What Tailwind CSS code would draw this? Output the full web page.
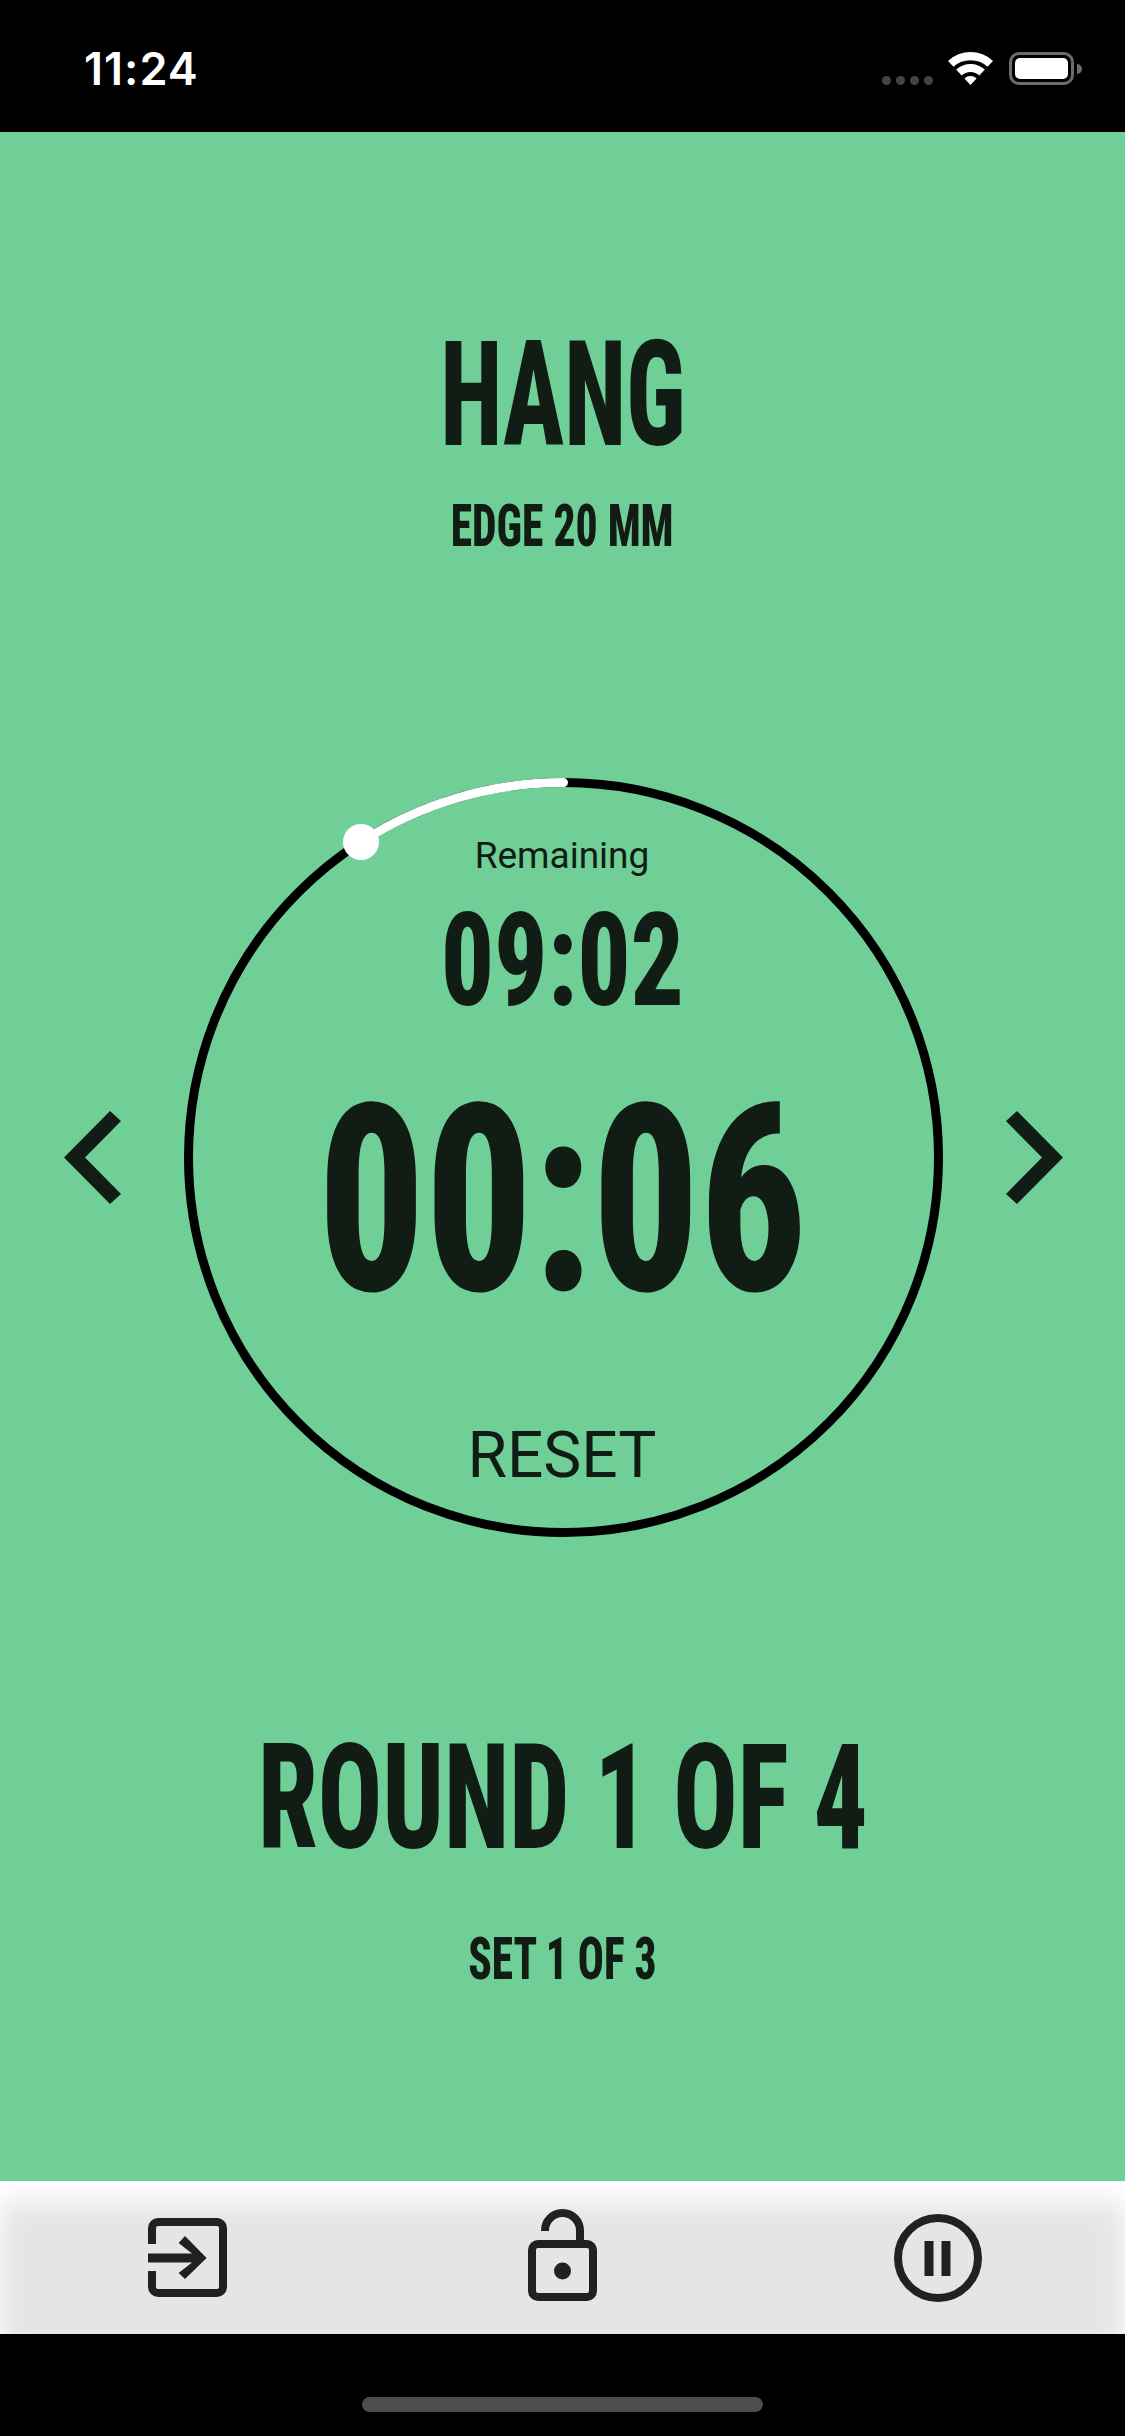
<!DOCTYPE html>
<html lang="en">
<head>
<meta charset="UTF-8">
<title>Hang timer</title>
<script src="https://cdn.jsdelivr.net/npm/@tailwindcss/browser@4"></script>
</head>
<body class="bg-black font-['Roboto',sans-serif]">
<div class="w-[1125px] h-[2436px] flex flex-col overflow-hidden">

    <!-- status bar -->
    <div class="h-[132px] bg-black flex items-start justify-between pl-[84px] pr-[51px] pt-[52px]">
        <span class="font-['Inter',sans-serif] font-semibold text-white text-[45px] leading-[33px] tracking-[1px]">11:24</span>
        <div class="flex items-start">
            <div class="flex gap-[5px] mt-[24px] mr-[15px]">
                <span class="w-[9px] h-[9px] rounded-full bg-[#444]"></span>
                <span class="w-[9px] h-[9px] rounded-full bg-[#444]"></span>
                <span class="w-[9px] h-[9px] rounded-full bg-[#444]"></span>
                <span class="w-[9px] h-[9px] rounded-full bg-[#444]"></span>
            </div>
            <svg class="w-[45px] h-[33px] mr-[16px]" viewBox="0 0 45 33" fill="#fff">
                <path d="M0 8.9 A33 33 0 0 1 45 8.9 L39.5 14.8 A25 25 0 0 0 5.5 14.8 Z"/>
                <path d="M8.2 17.6 A21 21 0 0 1 36.8 17.6 L31.4 23.5 A13 13 0 0 0 13.6 23.5 Z"/>
                <path d="M16.4 26.4 A9 9 0 0 1 28.6 26.4 L22.5 33 Z"/>
            </svg>
            <div class="relative w-[65px] h-[33px] border-[3px] border-[#6b6b6b] rounded-[10px] p-[3px]">
                <div class="w-full h-full bg-white rounded-[5px]"></div>
                <span class="absolute left-[65px] top-[9px] w-[5px] h-[10px] bg-[#6b6b6b] rounded-r-full"></span>
            </div>
        </div>
    </div>

    <!-- main -->
    <div class="h-[2049px] bg-[#6fcf97] flex flex-col items-center text-[#101c14]">
        <div class="mt-[211px] h-[105px] leading-[105px] text-[147px] font-extrabold font-stretch-[75%] scale-x-[.69] whitespace-nowrap">HANG</div>
        <div class="mt-[57px] h-[42px] leading-[42px] text-[59px] font-extrabold font-stretch-[75%] scale-x-[.737] whitespace-nowrap">EDGE 20 MM</div>

        <div class="mt-[231px] w-full flex items-center pl-[64px] gap-[63px]">
            <svg class="w-[57px] h-[93px]" viewBox="0 0 57 93"><polygon points="0,46.5 46,0 57,10 21,46.5 57,83 46,93" fill="#101c14"/></svg>

            <div class="relative w-[759px] h-[759px] pr-[3px] flex flex-col items-center">
                <svg class="absolute inset-0" width="759" height="759" viewBox="0 0 759 759" fill="none">
                    <circle cx="379.5" cy="379.5" r="375" stroke="#000" stroke-width="9"/>
                    <path d="M379.5 4.5 A375 375 0 0 0 177 64" stroke="#fff" stroke-width="9" stroke-linecap="round"/>
                    <circle cx="177" cy="64" r="18" fill="#fff"/>
                </svg>
                <div class="relative mt-[65px] h-[25px] leading-[25px] text-[37px]">Remaining</div>
                <div class="relative mt-[44px] h-[97px] leading-[97px] text-[129px] font-extrabold font-stretch-[75%] scale-x-[.815] whitespace-nowrap">09:02</div>
                <div class="relative mt-[93px] h-[197px] leading-[197px] text-[262px] font-extrabold font-stretch-[75%] scale-x-[.806] whitespace-nowrap">00:06</div>
                <div class="relative mt-[134px] h-[45px] leading-[45px] text-[64px]">RESET</div>
            </div>

            <svg class="w-[57px] h-[93px]" viewBox="0 0 57 93"><polygon points="57,46.5 11,0 0,10 36,46.5 0,83 11,93" fill="#101c14"/></svg>
        </div>

        <div class="mt-[209px] h-[105px] leading-[105px] text-[147px] font-extrabold font-stretch-[75%] scale-x-[.728] whitespace-nowrap">ROUND 1 OF 4</div>
        <div class="mt-[87px] h-[42px] leading-[42px] text-[59px] font-extrabold font-stretch-[75%] scale-x-[.733] whitespace-nowrap">SET 1 OF 3</div>
    </div>

    <!-- toolbar -->
    <div class="h-[153px] bg-[#e5e5e5] shadow-[inset_0_20px_28px_#fff] grid grid-cols-3 items-center justify-items-center">
        <svg class="w-[79px] h-[79px]" viewBox="0 0 79 79" fill="none">
            <path d="M4 26 V10 a6 6 0 0 1 6-6 H69 a6 6 0 0 1 6 6 V69 a6 6 0 0 1-6 6 H10 a6 6 0 0 1-6-6 V53" stroke="#212121" stroke-width="8"/>
            <path d="M0 35.5 H44 L30.6 25 L37 18 L58.6 40 L37 61 L30.6 55 L44 44.5 H0 Z" fill="#212121"/>
        </svg>
        <svg class="w-[69px] h-[92px] -mt-[5px]" viewBox="0 0 69 92" fill="none">
            <path d="M17 22 V21.5 a17.5 17.5 0 0 1 35 0 V35" stroke="#212121" stroke-width="8"/>
            <rect x="4" y="35" width="61" height="53" rx="6" stroke="#212121" stroke-width="8"/>
            <circle cx="34.5" cy="62" r="8.5" fill="#212121"/>
        </svg>
        <svg class="w-[88px] h-[88px]" viewBox="0 0 88 88" fill="none">
            <circle cx="44" cy="44" r="40" stroke="#212121" stroke-width="8"/>
            <rect x="30.5" y="27" width="9" height="35" fill="#212121"/>
            <rect x="47.5" y="27" width="9" height="35" fill="#212121"/>
        </svg>
    </div>

    <!-- home indicator -->
    <div class="h-[102px] bg-black flex justify-center pt-[63px]">
        <div class="w-[401px] h-[15px] rounded-full bg-[#4d4d4d]"></div>
    </div>
</div>
</body>
</html>
